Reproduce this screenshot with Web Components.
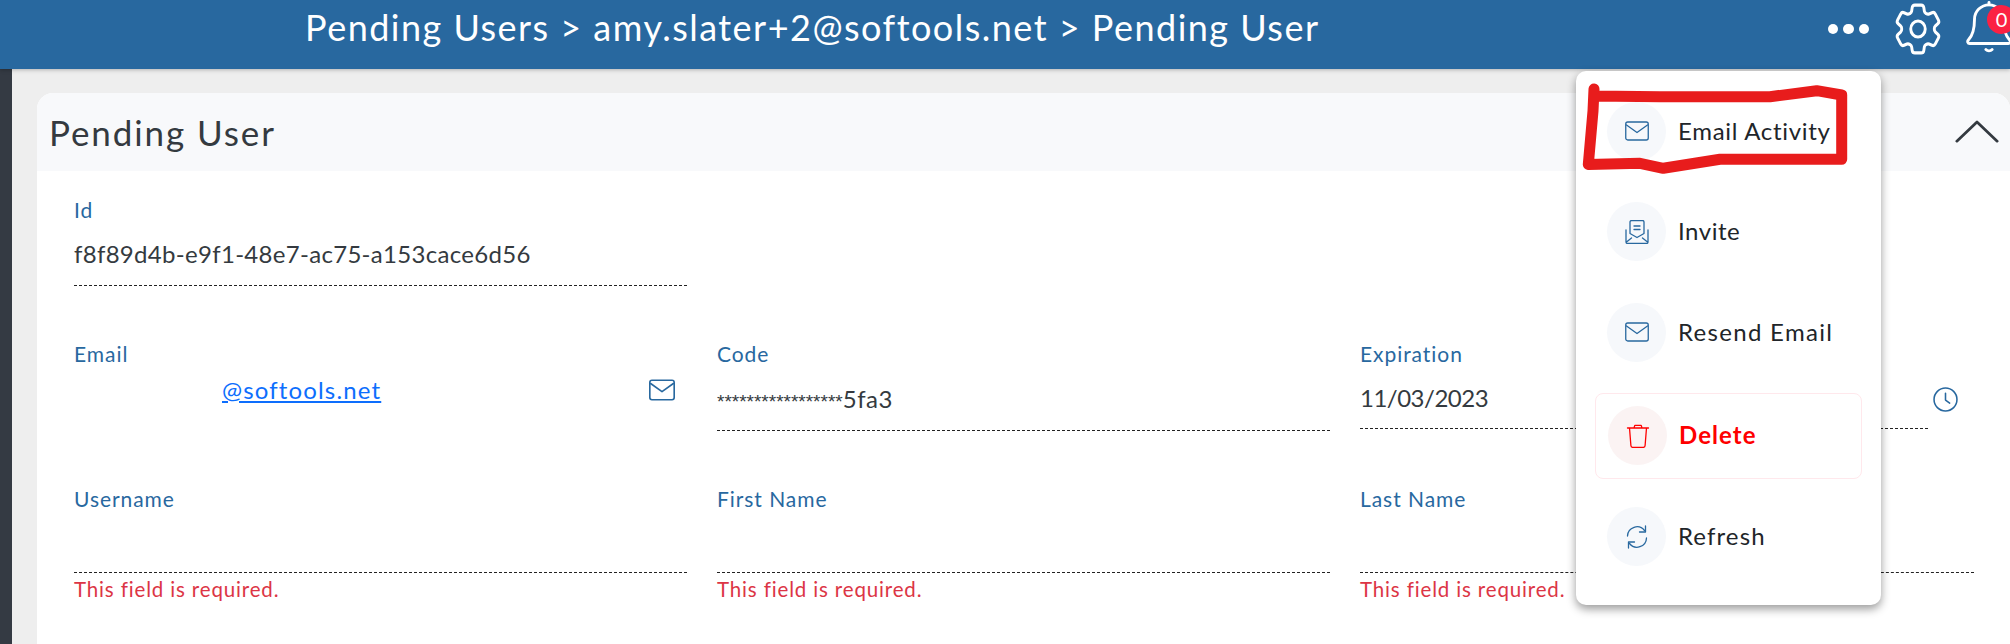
<!DOCTYPE html>
<html>
<head>
<meta charset="utf-8">
<style>
  html, body { margin: 0; height: 100%; overflow: hidden; }
  body { font-family: Lato, "Noto Sans", sans-serif; background: #eee; color: #343a40; }
</style>
</head>
<body>
<pending-page>
  <app-header slot="header" title="Pending Users > amy.slater+2@softools.net > Pending User"></app-header>
  <pending-card title="Pending User">
    <form-field label="Id" style="--value-h:63px;letter-spacing:.3px;margin-top:1px">f8f89d4b-e9f1-48e7-ac75-a153cace6d56</form-field>
    <span></span>
    <span></span>
    <form-field label="Email" noline style="--value-h:48px;--align:flex-start">
      <a href="#" style="margin-left:148px;color:#0d6efd;letter-spacing:1.15px;line-height:47px">@softools.net</a>
      <app-icon slot="icon" name="mail" size="26" style="margin:11px 12px 0 0"></app-icon>
    </form-field>
    <form-field label="Code" style="--value-h:64px"><span style="font:19px 'Liberation Sans',sans-serif;letter-spacing:0">*****************</span>5fa3</form-field>
    <form-field label="Expiration" style="--value-h:62px;letter-spacing:-.5px">11/03/2023
      <app-icon slot="after" name="clock" size="25" style="margin:45px 16px 0 5px"></app-icon>
    </form-field>
    <form-field label="Username" error="This field is required." style="--value-h:61px"></form-field>
    <form-field label="First Name" error="This field is required." style="--value-h:61px"></form-field>
    <form-field label="Last Name" error="This field is required." style="--value-h:61px"></form-field>
  </pending-card>
  <action-menu slot="overlay">
    <menu-item icon="mail" style="letter-spacing:.7px">Email Activity</menu-item>
    <menu-item icon="invite">Invite</menu-item>
    <menu-item icon="mail" style="letter-spacing:1.3px">Resend Email</menu-item>
    <menu-item icon="trash" danger style="letter-spacing:1.05px">Delete</menu-item>
    <menu-item icon="refresh" style="letter-spacing:1.1px">Refresh</menu-item>
  </action-menu>
</pending-page>

<script>
// 图标路径 (viewBox 24x24)
const ICONS = {
  mail: '<rect x="0.750" y="3" width="22.500" height="18" rx="2"/><path d="M1.500 6l10.500 7.500L22.500 6"/>',
  invite: '<path d="M5 11V2a1.500 1.500 0 0 1 1.500-1.500h11A1.500 1.500 0 0 1 19 2v11.500L12 17.500l-7-4z"/><path d="M9 6h6M9 9.500h6"/><path d="M1 10v12a1.500 1.500 0 0 0 1.500 1.500h19A1.500 1.500 0 0 0 23 22V10M1.500 22l5-4M22.500 22l-5-4"/>',
  trash: '<path d="M1.500 4h21M8 4l.8-2.600h6.400L16 4M3.500 4l1.400 17.500a2 2 0 0 0 2 1.900h10.200a2 2 0 0 0 2-1.900L20.500 4"/>',
  refresh: '<path d="M2.500 11a9.500 9.500 0 0 1 17-5.500M21.500 13a9.500 9.500 0 0 1-17 5.500"/><path d="M20.500 1v6h-6M3.500 23v-6h6"/>',
  clock: '<circle cx="12" cy="12" r="11"/><path d="M12 6v6.500l4 3"/>',
  chevron: '<path d="M1 17L12 6.500 23 17"/>',
  gear: '<path d="M9.594 3.94c.09-.542.56-.94 1.11-.94h2.593c.55 0 1.02.398 1.11.94l.213 1.281c.063.374.313.686.645.87.074.04.147.083.22.127.324.196.72.257 1.075.124l1.217-.456a1.125 1.125 0 011.37.49l1.296 2.247a1.125 1.125 0 01-.26 1.431l-1.003.827c-.293.24-.438.613-.431.992a6.759 6.759 0 010 .255c-.007.378.138.75.43.99l1.005.828c.424.35.534.954.26 1.43l-1.298 2.247a1.125 1.125 0 01-1.369.491l-1.217-.456c-.355-.133-.75-.072-1.076.124a6.57 6.57 0 01-.22.128c-.331.183-.581.495-.644.869l-.213 1.28c-.09.543-.56.941-1.11.941h-2.594c-.55 0-1.02-.398-1.11-.94l-.213-1.281c-.062-.374-.312-.686-.644-.87a6.52 6.52 0 01-.22-.127c-.325-.196-.72-.257-1.076-.124l-1.217.456a1.125 1.125 0 01-1.369-.49l-1.297-2.247a1.125 1.125 0 01.26-1.431l1.004-.827c.292-.24.437-.613.43-.992a6.932 6.932 0 010-.255c.007-.378-.138-.75-.43-.99l-1.004-.828a1.125 1.125 0 01-.26-1.43l1.297-2.247a1.125 1.125 0 011.37-.491l1.216.456c.356.133.751.072 1.076-.124.072-.044.146-.087.22-.128.332-.183.582-.495.644-.869l.214-1.281z"/><circle cx="12" cy="12" r="3"/>',
  bell: '<path d="M18 8A6 6 0 0 0 6 8c0 5-1 7-2.500 8.500-.6.6-.3 1.500.5 1.500h16c.8 0 1.100-.9.500-1.500C19 15 18 13 18 8z"/><path d="M12 2V1"/><path d="M10.700 20.500a1.800 1.800 0 0 0 2.600 0"/>'
};

class AppIcon extends HTMLElement {
  constructor() {
    super();
    this.attachShadow({ mode: 'open' });
    const size = this.getAttribute('size') || 24;
    const stroke = this.getAttribute('stroke') || 1.5;
    this.shadowRoot.innerHTML = `
      <style>
        :host { display: inline-flex; flex: none; color: #28689f; }
        svg { display: block; fill: none; stroke: currentColor; stroke-linecap: round; stroke-linejoin: round; }
      </style>
      <svg width="${size}" height="${size}" viewBox="0 0 24 24" stroke-width="${stroke}">${ICONS[this.getAttribute('name')]}</svg>
    `;
  }
}

class PendingPage extends HTMLElement {
  constructor() {
    super();
    this.attachShadow({ mode: 'open' });
    this.shadowRoot.innerHTML = `
      <style>
        :host { display: flex; flex-direction: column; height: 644px; position: relative; overflow: hidden; }
        .main { flex: 1; display: flex; min-height: 0; }
        .rail { width: 12px; background: #343a43; flex: none; }
        .content { flex: 1; padding: 24px 0 0 25px; min-width: 0; display: flex; }
      </style>
      <slot name="header"></slot>
      <div class="main">
        <div class="rail"></div>
        <div class="content"><slot></slot></div>
      </div>
      <slot name="overlay"></slot>
    `;
  }
}

class AppHeader extends HTMLElement {
  constructor() {
    super();
    this.attachShadow({ mode: 'open' });
    this.shadowRoot.innerHTML = `
      <style>
        :host { display: flex; align-items: center; height: 69px; background: #28689f; color: #fff; overflow: hidden;
                padding-left: 305px; box-shadow: 0 1px 4px rgba(0,0,0,.25); position: relative; z-index: 1; }
        h1 { margin: 0 0 15px; font-size: 36px; font-weight: 400; letter-spacing: 1.48px; white-space: nowrap; flex: 1; }
        .dots { display: flex; gap: 5px; margin-right: 20px; margin-bottom: 11px; }
        .dots i { width: 10.400px; height: 10.400px; border-radius: 50%; background: #fff; }
        .gear { color: #fff; margin-right: 14px; margin-bottom: 11px; transform: scaleY(1.1); }
        .bell { position: relative; width: 49px; height: 69px; flex: none; }
        .bell app-icon { color: #fff; margin-left: -1px; }
        .badge { position: absolute; left: 26px; top: 5px; width: 29px; height: 29px; border-radius: 50%; background: #fb2143;
                 font-size: 20px; line-height: 29px; text-align: center; color: #fff; }
      </style>
      <h1></h1>
      <div class="dots"><i></i><i></i><i></i></div>
      <app-icon class="gear" name="gear" size="58" stroke="1.2"></app-icon>
      <div class="bell"><app-icon name="bell" size="58" stroke="1.2"></app-icon><span class="badge">0</span></div>
    `;
    this.shadowRoot.querySelector('h1').textContent = this.getAttribute('title');
    this.removeAttribute('title');
  }
}

class PendingCard extends HTMLElement {
  constructor() {
    super();
    this.attachShadow({ mode: 'open' });
    this.shadowRoot.innerHTML = `
      <style>
        :host { display: flex; flex-direction: column; flex: 1; min-width: 0; background: #fff; border-radius: 16px 16px 0 0; overflow: hidden; }
        .head { display: flex; align-items: center; justify-content: space-between; height: 78px; background: #f8f9fb; padding: 0 11px 0 12px; }
        h2 { margin: 0; font-size: 35px; font-weight: 400; letter-spacing: 1.9px; color: #343a40; }
        .grid { display: grid; grid-template-columns: 613px 613px 614px; column-gap: 30px; row-gap: 56px; padding: 26px 0 0 37px; }
        app-icon { color: #343a40; }
      </style>
      <div class="head"><h2></h2><app-icon name="chevron" size="44" stroke="1.500"></app-icon></div>
      <div class="grid"><slot></slot></div>
    `;
    this.shadowRoot.querySelector('h2').textContent = this.getAttribute('title');
    this.removeAttribute('title');
  }
}

class FormField extends HTMLElement {
  constructor() {
    super();
    this.attachShadow({ mode: 'open' });
    this.shadowRoot.innerHTML = `
      <style>
        :host { display: flex; align-items: flex-start; min-width: 0; letter-spacing: .55px; }
        .main { flex: 1; min-width: 0; }
        .label { font-size: 21px; line-height: 24px; color: #28689f; letter-spacing: .95px; }
        .value { display: flex; align-items: var(--align, center); justify-content: space-between; height: var(--value-h, 64px);
                 border-bottom: 1px dashed #222; font-size: 24px; color: #343a40; }
        :host([noline]) .value { border-bottom: 0; }
        .error { font-size: 20.500px; line-height: 32px; color: #dc3545; letter-spacing: .85px; }
      </style>
      <div class="main">
        <div class="label"></div>
        <div class="value"><span><slot></slot></span><slot name="icon"></slot></div>
        <div class="error"></div>
      </div>
      <slot name="after"></slot>
    `;
    this.shadowRoot.querySelector('.label').textContent = this.getAttribute('label');
    this.shadowRoot.querySelector('.error').textContent = this.getAttribute('error') || '';
  }
}

class ActionMenu extends HTMLElement {
  constructor() {
    super();
    this.attachShadow({ mode: 'open' });
    this.shadowRoot.innerHTML = `
      <style>
        :host { position: absolute; left: 1576px; top: 71px; width: 305px; height: 534px; box-sizing: border-box; z-index: 2;
                display: flex; flex-direction: column; padding: 10px 19px 0 20px; background: #fff; border-radius: 10px;
                box-shadow: 0 4px 10px rgba(0,0,0,.4); }
        svg { position: absolute; left: 0; top: 0; pointer-events: none; }
      </style>
      <slot></slot>
      <svg width="305" height="120" fill="none" stroke="#e81c1c" stroke-width="11" stroke-linecap="round" stroke-linejoin="round">
        <path d="M18 18L17 40 12.300 93.500 64 92.300 87.300 97.300 144 88.300 265.700 88.300 265.700 24 240.700 19.700 194 25.700 84 25.700 18 25"/>
      </svg>
    `;
  }
}

class MenuItem extends HTMLElement {
  constructor() {
    super();
    this.attachShadow({ mode: 'open' });
    this.shadowRoot.innerHTML = `
      <style>
        :host { display: flex; align-items: center; height: 100.500px; padding-left: 11px; gap: 12px; font-size: 24px; color: #212529; letter-spacing: .55px; }
        .dot { width: 59px; height: 59px; border-radius: 50%; background: #f6f8fb; display: flex; align-items: center; justify-content: center; flex: none; }
        .text { position: relative; top: -1px; }
        :host([danger]) { height: 86px; box-sizing: border-box; margin: 10px 0 8px -1px; padding-left: 12px; gap: 12px; border: 1px solid #ffe8ec; border-radius: 8px;
                          color: #fe0000; font-weight: 700; }
        :host([danger]) .dot { background: #fbf3f3; }
        :host([danger]) app-icon { color: #fe0000; }
      </style>
      <span class="dot"><app-icon name="${this.getAttribute('icon')}" size="24" stroke="1.300"></app-icon></span>
      <span class="text"><slot></slot></span>
    `;
  }
}

customElements.define('app-icon', AppIcon);
customElements.define('pending-page', PendingPage);
customElements.define('app-header', AppHeader);
customElements.define('pending-card', PendingCard);
customElements.define('form-field', FormField);
customElements.define('action-menu', ActionMenu);
customElements.define('menu-item', MenuItem);
</script>
</body>
</html>
